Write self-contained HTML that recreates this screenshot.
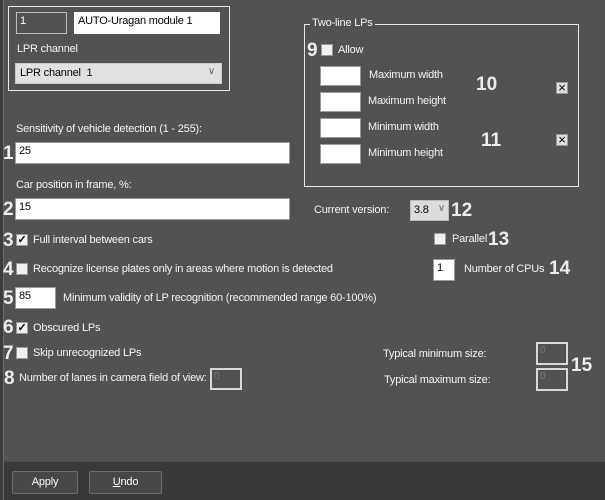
<!DOCTYPE html>
<html><head><style>
*{box-sizing:border-box;margin:0;padding:0}
body{width:605px;height:500px;background:#525252;position:relative;overflow:hidden;font-family:"Liberation Sans",Arial,sans-serif;font-size:11px;letter-spacing:-0.2px;color:#f4f4f4}
.a{position:absolute;white-space:nowrap}
.in{position:absolute;background:#fff;border:1px solid #9a9a9a;color:#000;padding:2px 3px;font-size:11px}
.n{position:absolute;font-weight:bold;font-size:19px;letter-spacing:0;color:#ececec;line-height:19px}
.cb{position:absolute;width:12px;height:12px;background:#f0f0f0;border:1px solid #9a9a9a;font-size:11px;line-height:10px;text-align:center;color:#000;font-weight:bold}
.eb{position:absolute;border:2px solid #d8d8d8;color:#777;font-size:10px;padding:1px 2px}
.btn{position:absolute;background:#474747;border:1px solid #6c6c6c;border-radius:2px;color:#fff;text-align:center;line-height:21px}
</style></head><body>
<div class="a" style="left:0;top:0;width:3px;height:500px;background:#3c3c3c"></div>
<div class="a" style="left:3px;top:0;width:1px;height:500px;background:#6a6a6a"></div>

<div class="a" style="left:8px;top:6px;width:222px;height:85px;border:1px solid #e8e8e8"></div>
<div class="a" style="left:16px;top:12px;width:51px;height:22px;border:1px solid #bcbcbc;padding:2px 3px;color:#fff">1</div>
<div class="in" style="left:74px;top:12px;width:146px;height:22px;border-color:#fff">AUTO-Uragan module 1</div>
<div class="a" style="left:17px;top:43px">LPR channel</div>
<div class="a" style="left:15px;top:63px;width:207px;height:21px;background:#e1e1e1;border:1px solid #ccc;color:#000;padding:3px 4px">LPR channel&nbsp; 1<span style="position:absolute;right:6px;top:2px;color:#666;font-size:10px">&#8744;</span></div>

<div class="a" style="left:16px;top:123px">Sensitivity of vehicle detection (1 - 255):</div>
<div class="n" style="left:3px;top:144px">1</div>
<div class="in" style="left:15px;top:142px;width:275px;height:22px">25</div>
<div class="a" style="left:16px;top:179px">Car position in frame, %:</div>
<div class="n" style="left:3px;top:200px">2</div>
<div class="in" style="left:15px;top:198px;width:275px;height:22px">15</div>

<div class="n" style="left:3px;top:231px">3</div>
<div class="cb" style="left:16px;top:234px">&#10003;</div>
<div class="a" style="left:33px;top:234px">Full interval between cars</div>
<div class="n" style="left:3px;top:260px">4</div>
<div class="cb" style="left:16px;top:263px"></div>
<div class="a" style="left:33px;top:263px">Recognize license plates only in areas where motion is detected</div>
<div class="n" style="left:3px;top:289px">5</div>
<div class="in" style="left:15px;top:287px;width:41px;height:22px">85</div>
<div class="a" style="left:63px;top:292px">Minimum validity of LP recognition (recommended range 60-100%)</div>
<div class="n" style="left:3px;top:318px">6</div>
<div class="cb" style="left:16px;top:322px">&#10003;</div>
<div class="a" style="left:33px;top:322px">Obscured LPs</div>
<div class="n" style="left:3px;top:344px">7</div>
<div class="cb" style="left:16px;top:347px"></div>
<div class="a" style="left:33px;top:347px">Skip unrecognized LPs</div>
<div class="n" style="left:4px;top:369px">8</div>
<div class="a" style="left:19px;top:372px">Number of lanes in camera field of view:</div>
<div class="eb" style="left:210px;top:368px;width:32px;height:22px">0</div>

<div class="a" style="left:304px;top:24px;width:275px;height:163px;border:1px solid #e8e8e8"></div>
<div class="a" style="left:310px;top:17px;background:#525252;padding:0 2px">Two-line LPs</div>
<div class="n" style="left:307px;top:41px">9</div>
<div class="cb" style="left:321px;top:44px"></div>
<div class="a" style="left:338px;top:44px">Allow</div>
<div class="in" style="left:320px;top:66px;width:41px;height:20px"></div>
<div class="in" style="left:320px;top:92px;width:41px;height:20px"></div>
<div class="in" style="left:320px;top:118px;width:41px;height:20px"></div>
<div class="in" style="left:320px;top:144px;width:41px;height:20px"></div>
<div class="a" style="left:369px;top:69px">Maximum width</div>
<div class="a" style="left:368px;top:95px">Maximum height</div>
<div class="a" style="left:368px;top:121px">Minimum width</div>
<div class="a" style="left:368px;top:147px">Minimum height</div>
<div class="n" style="left:476px;top:75px">10</div>
<div class="n" style="left:481px;top:131px">11</div>
<div class="cb" style="left:556px;top:82px;background:#ddd;font-weight:normal;font-size:13px">&#215;</div>
<div class="cb" style="left:556px;top:134px;background:#ddd;font-weight:normal;font-size:13px">&#215;</div>

<div class="a" style="left:314px;top:204px">Current version:</div>
<div class="a" style="left:410px;top:200px;width:39px;height:21px;background:#dcdcdc;border:1px solid #bbb;color:#000;padding:3px 3px">3.8<span style="position:absolute;right:3px;top:2px;color:#666;font-size:10px">&#8744;</span></div>
<div class="n" style="left:451px;top:201px">12</div>
<div class="cb" style="left:434px;top:233px"></div>
<div class="a" style="left:452px;top:233px">Parallel</div>
<div class="n" style="left:488px;top:230px">13</div>
<div class="in" style="left:433px;top:259px;width:22px;height:22px">1</div>
<div class="a" style="left:464px;top:263px">Number of CPUs</div>
<div class="n" style="left:549px;top:259px">14</div>

<div class="a" style="left:383px;top:348px">Typical minimum size:</div>
<div class="a" style="left:384px;top:374px">Typical maximum size:</div>
<div class="eb" style="left:536px;top:342px;width:32px;height:23px">0</div>
<div class="eb" style="left:536px;top:368px;width:32px;height:23px">0</div>
<div class="n" style="left:571px;top:356px">15</div>

<div class="a" style="left:4px;top:461px;width:601px;height:39px;background:#3a3939;border-top:1px solid #4a4a4a"></div>
<div class="btn" style="left:12px;top:471px;width:66px;height:23px">Apply</div>
<div class="btn" style="left:89px;top:471px;width:73px;height:23px"><u>U</u>ndo</div>
</body></html>
